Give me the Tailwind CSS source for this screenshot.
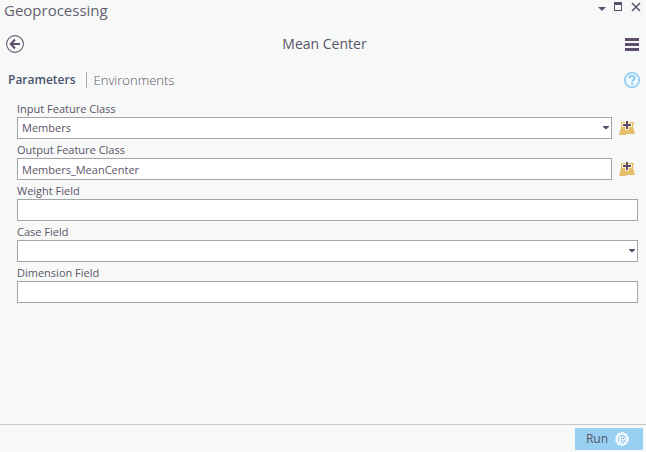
<!DOCTYPE html>
<html lang="en">
<head>
<meta charset="utf-8">
<meta name="viewport" content="width=device-width, initial-scale=1">
<title>Geoprocessing</title>
<script src="https://cdn.jsdelivr.net/npm/@tailwindcss/browser@4"></script>
</head>
<body class="flex min-h-screen flex-col bg-[#f7f9f8] font-['Open_Sans',sans-serif] text-[11px] text-[#5b5468]">
<header class="flex h-5 items-center justify-between pr-1 pl-1">
  <h1 class="text-[15px] leading-5 text-[#655f70]">Geoprocessing</h1>
  <div class="flex items-start gap-2 pb-2">
    <button type="button" aria-label="Window options"><svg class="h-3 w-2" viewBox="0 0 8 12"><path d="M0 7h8L4 11z" fill="#5d4f6b"/></svg></button>
    <button type="button" aria-label="Maximize"><svg class="h-3 w-2" viewBox="0 0 8 12" shape-rendering="crispEdges"><path d="M0 2h8v9H0zM1 5v5h6V5z" fill="#5d4f6b" fill-rule="evenodd"/></svg></button>
    <button type="button" aria-label="Close"><svg class="h-3 w-3" viewBox="0 0 12 12"><path d="M2 3l8 8M10 3l-8 8" fill="none" stroke="#5d4f6b" stroke-width="1.5"/></svg></button>
  </div>
</header>
<div class="flex h-12 items-center justify-between pr-[7px] pl-1.5">
  <button type="button" aria-label="Back"><svg class="h-[18px] w-[18px]" viewBox="0 0 18 18"><circle cx="9" cy="9" r="8.4" fill="none" stroke="#655a70" stroke-width="1.1"/><path d="M5 9h9M9 4.500L4.800 9L9 13.500" fill="none" stroke="#5d4f6b" stroke-width="2"/></svg></button>
  <h2 class="text-sm">Mean Center</h2>
  <button type="button" aria-label="Menu"><svg class="h-[13px] w-[14px]" viewBox="0 0 14 13" shape-rendering="crispEdges"><path d="M0 0h14v3H0zM0 5h14v3H0zM0 10h14v3H0z" fill="#5d4f6b"/></svg></button>
</div>
<nav class="flex h-6 items-center justify-between pr-1.5 pl-2">
  <div class="flex items-center text-[13px]">
    <a href="#parameters" class="border-r border-[#aaa] pr-2.5 text-xs leading-4 font-semibold text-[#4b5470]">Parameters</a>
    <a href="#environments" class="pl-[7px] leading-4 font-light">Environments</a>
  </div>
  <button type="button" aria-label="Help"><svg class="h-4 w-4" viewBox="0 0 16 16"><circle cx="8" cy="8" r="7.200" fill="#f3fafe" stroke="#8ecbf0" stroke-width="1.600"/><path d="M5.500 6.200C5.500 3 10.600 3 10.600 6C10.600 8 8.200 8 8.200 10M8.200 11v2" fill="none" stroke="#8ecbf0" stroke-width="2.200"/></svg></button>
</nav>
<main id="parameters" class="flex-1 pt-[9px] pr-2 pb-4 pl-[17px]">
  <form id="tool" class="flex flex-col gap-[3px]">
    <div>
      <label for="input" class="block leading-4">Input Feature Class</label>
      <div class="flex items-center gap-[7px]">
        <div class="relative flex-1">
          <select id="input" class="block h-[22px] w-full appearance-none border border-[#a5a5a8] bg-white px-1 pt-px"><option>Members</option></select>
          <svg class="pointer-events-none absolute top-2 right-0.5 h-1.5 w-2" viewBox="0 0 8 6"><path d="M1 1h6v1L4 4.500L1 2z" fill="#5d4f6b"/></svg>
        </div>
        <button type="button" aria-label="Browse input" class="pr-[3px]"><svg class="h-3.5 w-4" viewBox="0 0 16 14"><path d="M2 1h13l-1 5 2 7H8l-1 1H0l2-8z" fill="#e4be68"/><path d="M6 0h4v2h3v4h-3v3H6V6H3V2h3z" fill="#fcf3cf"/><path d="M7 0h2v3h3v2H9v3H7V5H4V3h3z" fill="#5d4f6b"/></svg></button>
      </div>
    </div>
    <div>
      <label for="output" class="block leading-4">Output Feature Class</label>
      <div class="flex items-center gap-[7px]">
        <input id="output" type="text" value="Members_MeanCenter" class="block h-[22px] min-w-0 flex-1 border border-[#a5a5a8] bg-white px-1">
        <button type="button" aria-label="Browse output" class="pr-[3px]"><svg class="h-3.5 w-4" viewBox="0 0 16 14"><path d="M2 1h13l-1 5 2 7H8l-1 1H0l2-8z" fill="#e4be68"/><path d="M6 0h4v2h3v4h-3v3H6V6H3V2h3z" fill="#fcf3cf"/><path d="M7 0h2v3h3v2H9v3H7V5H4V3h3z" fill="#5d4f6b"/></svg></button>
      </div>
    </div>
    <div>
      <label for="weight" class="block leading-4">Weight Field</label>
      <input id="weight" type="text" class="block h-[22px] w-full border border-[#a5a5a8] bg-white px-1">
    </div>
    <div>
      <label for="case" class="block leading-4">Case Field</label>
      <div class="relative">
        <select id="case" class="block h-[22px] w-full appearance-none border border-[#a5a5a8] bg-white px-1"><option></option></select>
        <svg class="pointer-events-none absolute top-2 right-0.5 h-1.5 w-2" viewBox="0 0 8 6"><path d="M1 1h6v1L4 4.500L1 2z" fill="#5d4f6b"/></svg>
      </div>
    </div>
    <div>
      <label for="dimension" class="block leading-4">Dimension Field</label>
      <input id="dimension" type="text" class="block h-[22px] w-full border border-[#a5a5a8] bg-white px-1">
    </div>
  </form>
</main>
<footer class="flex justify-end border-t border-[#c8cac9] pt-[3px] pr-[3px] pb-0.5">
  <button type="submit" form="tool" class="flex h-[22px] items-center gap-[7px] bg-[#97d0f2] pr-3.5 pl-[11px] text-xs">Run
    <svg class="h-3.5 w-3.5" viewBox="0 0 14 14"><circle cx="7" cy="7" r="5.600" fill="#a9d8f4" stroke="#fff" stroke-width="2.400" stroke-dasharray="3 .5"/><path d="M4.500 3L11 7L4.500 11z" fill="#fff"/><path d="M6 4h1v1H6zM6 6h1v1H6zM8 6h1v1H8zM6 8h1v1H6z" fill="#5f8fae"/></svg>
  </button>
</footer>
</body>
</html>
